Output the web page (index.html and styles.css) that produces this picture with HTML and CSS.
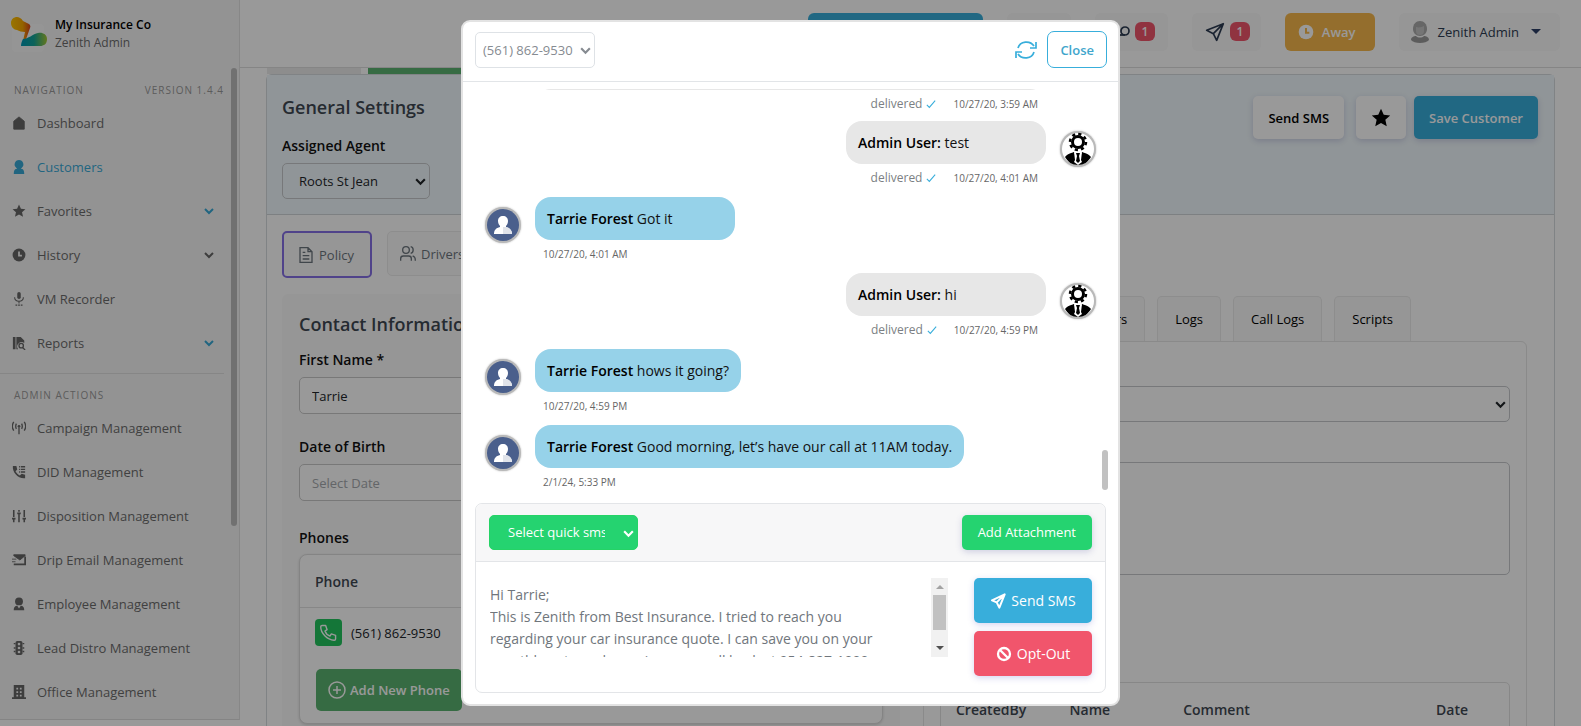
FILE: index.html
```html
<!DOCTYPE html>
<html lang="en">
<head>
    <meta charset="UTF-8">
    <meta name="viewport" content="width=device-width, initial-scale=1.0">
    <title>Zenith - Customer</title>
    <link rel="stylesheet" href="styles.css">
</head>
<body>
    <!-- Shared icons -->
    <svg class="sprite" aria-hidden="true">
        <symbol id="chevron" viewBox="0 0 12 12"><path d="M2 4l4 4 4-4" fill="none" stroke="currentColor" stroke-width="2"/></symbol>
        <symbol id="star" viewBox="0 0 24 24"><path d="M12 1l3.3 7.2 7.7.8-5.8 5.2 1.7 7.8-6.9-4-6.9 4 1.7-7.8L1 9l7.7-.8z" fill="currentColor"/></symbol>
        <symbol id="clock" viewBox="0 0 24 24"><circle cx="12" cy="12" r="11" fill="currentColor"/><path d="M12 6v7h5" fill="none" stroke="var(--hand)" stroke-width="3"/></symbol>
        <symbol id="plane" viewBox="0 0 24 24"><path d="M22 2L2 10l8 4 4 8zM22 2L10 14" fill="none" stroke="currentColor" stroke-width="2" stroke-linejoin="round"/></symbol>
        <symbol id="client" viewBox="0 0 36 36">
            <circle cx="18" cy="18" r="16" fill="#4a5f8c"/>
            <path d="M18 9c-3 0-5 2-5 5 0 2 1 4 2 5v1c-4 1-6 3-6 7h18c0-4-2-6-6-7v-1c1-1 2-3 2-5 0-3-2-5-5-5z" fill="#fff"/>
            <path d="M18 20h3c4 1 6 3 6 7h-9z" fill="#e1e4ea"/>
        </symbol>
        <symbol id="admin" viewBox="0 0 36 36">
            <circle cx="18" cy="18" r="16" fill="#fff"/>
            <circle cx="18" cy="11" r="5.500" fill="none" stroke="#000" stroke-width="3"/>
            <circle cx="18" cy="11" r="8" fill="none" stroke="#000" stroke-width="2.500" stroke-dasharray="3.200 3.080"/>
            <path d="M5 26c3-4 7-4 9-5l4 10 4-10c2 1 6 1 9 5-3 5-7 8-13 8s-10-3-13-8z" fill="#000"/>
            <path d="M14 21l4 3 4-3-1 8 1 2-4 3-4-3 1-2z" fill="#fff"/>
            <path d="M16 22h4l-1 3 1 5-2 2-2-2 1-5z" fill="#000"/>
        </symbol>
    </svg>

    <div class="app">
        <aside class="sidebar">
            <div class="brand">
                <svg class="logo" viewBox="0 0 36 36">
                    <defs>
                        <linearGradient id="warm"><stop offset="0" stop-color="#ffc400"/><stop offset=".6" stop-color="#f5a400"/><stop offset="1" stop-color="#d9411c"/></linearGradient>
                        <linearGradient id="cool"><stop offset="0" stop-color="#0098b5"/><stop offset=".5" stop-color="#14a597"/><stop offset="1" stop-color="#a5c733"/></linearGradient>
                    </defs>
                    <rect x="1" y="8" width="32" height="28" rx="4" fill="#fff" opacity=".3"/>
                    <path d="M6 1c2 0 4 1 6 4l6 3c1 1 2 2 1 4l-5 14-2-1 2-9c-3 0-6-1-8-2-3 0-6-3-6-7s3-6 6-6z" fill="url(#warm)"/>
                    <path d="M10 30c0-3 1-5 2-7 5 0 10-5 15-6 4-1 9 1 9 6s-3 7-7 7z" fill="url(#cool)"/>
                </svg>
                <div>
                    <p class="company">My Insurance Co</p>
                    <p class="role">Zenith Admin</p>
                </div>
            </div>
            <nav>
                <div class="nav-title"><span>NAVIGATION</span><span>VERSION 1.4.4</span></div>
                <a href="#" class="nav-item"><svg viewBox="0 0 16 16"><path d="M8 1l6 5v9H2V6z" fill="currentColor" stroke="currentColor" stroke-linejoin="round"/></svg><span>Dashboard</span></a>
                <a href="#" class="nav-item active"><svg viewBox="0 0 16 16"><path d="M8 0a5 5 0 0 1 3 9l-1 1c3 0 4 2 4 6H2c0-4 1-6 4-6L5 9a5 5 0 0 1 3-9z" fill="currentColor"/></svg><span>Customers</span></a>
                <a href="#" class="nav-item"><svg><use href="#star"/></svg><span>Favorites</span><svg class="arrow blue"><use href="#chevron"/></svg></a>
                <a href="#" class="nav-item"><svg><use href="#clock"/></svg><span>History</span><svg class="arrow"><use href="#chevron"/></svg></a>
                <a href="#" class="nav-item"><svg viewBox="0 0 16 16"><rect x="6" y="0" width="4" height="8" rx="2" fill="currentColor"/><path d="M3 6c0 6 10 6 10 0M8 10v3M4 15h2M7 15h2M10 15h2" fill="none" stroke="currentColor" stroke-width="1.2"/></svg><span>VM Recorder</span></a>
                <a href="#" class="nav-item"><svg viewBox="0 0 16 16"><path d="M1 1h3v14H1zM5 1h5l4 4v3a5 5 0 0 0-7 7H5z" fill="currentColor"/><circle cx="10.500" cy="11" r="2.500" fill="none" stroke="currentColor" stroke-width="1.500"/><path d="M12 13l3 3" stroke="currentColor" stroke-width="1.500"/></svg><span>Reports</span><svg class="arrow blue"><use href="#chevron"/></svg></a>
                <div class="nav-title second"><span>ADMIN ACTIONS</span></div>
                <a href="#" class="nav-item"><svg viewBox="0 0 16 16"><circle cx="8" cy="6" r="1.500" fill="currentColor"/><path d="M8 7v8M5 9c-1-2-1-4 0-6M11 9c1-2 1-4 0-6M2 11C0 8 0 4 2 1M14 11c2-3 2-7 0-10" fill="none" stroke="currentColor" stroke-width="1.500"/></svg><span>Campaign Management</span></a>
                <a href="#" class="nav-item"><svg viewBox="0 0 16 16"><path d="M1 1h4l1 4-2 2c1 2 3 4 5 5l2-2 4 1v4C7 16 0 8 1 1z" fill="currentColor"/><path d="M8 2h1M10 2h5M8 5h1M10 5h5M8 8h1M10 8h5" stroke="currentColor" stroke-width="1.500"/></svg><span>DID Management</span></a>
                <a href="#" class="nav-item"><svg viewBox="0 0 16 16"><path d="M2 1v8M2 11v4M8 1v2M8 6v9M14 1v8M14 11v4M0 11h4M6 5h4M12 11h4" stroke="currentColor" stroke-width="1.800"/></svg><span>Disposition Management</span></a>
                <a href="#" class="nav-item"><svg viewBox="0 0 16 16"><path d="M2 2h13v1l-6 5-7-5zM0 7h5M0 10h4" fill="currentColor" stroke="currentColor"/><path d="M15 4v9H2" fill="none" stroke="currentColor" stroke-width="2"/></svg><span>Drip Email Management</span></a>
                <a href="#" class="nav-item"><svg viewBox="0 0 16 16"><circle cx="8" cy="5" r="4.500" fill="currentColor"/><path d="M2 15c0-4 2-5 4-5l2 3 2-3c2 0 4 1 4 5z" fill="currentColor"/></svg><span>Employee Management</span></a>
                <a href="#" class="nav-item"><svg viewBox="0 0 16 16"><rect x="4" y="0" width="8" height="16" rx="2" fill="currentColor"/><path d="M2 3h2M12 3h2M2 8h2M12 8h2M2 12h2M12 12h2" stroke="currentColor" stroke-width="1.500"/><g fill="#f6f6f6"><circle cx="8" cy="3.500" r="1.500"/><circle cx="8" cy="8" r="1.500"/><circle cx="8" cy="12.500" r="1.500"/></g></svg><span>Lead Distro Management</span></a>
                <a href="#" class="nav-item"><svg viewBox="0 0 16 16"><path d="M2 0h12v14h2v2H0v-2h2z" fill="currentColor"/><path d="M5 3h2v2H5zM9 3h2v2H9zM5 7h2v2H5zM9 7h2v2H9zM5 11h2v2H5zM9 11h2v2H9z" fill="#f6f6f6"/></svg><span>Office Management</span></a>
            </nav>
            <div class="side-thumb"></div>
        </aside>

        <div class="main">
            <header class="topbar">
                <button class="top-btn dialer" aria-label="Dialer"></button>
                <button class="top-btn calls" aria-label="Calls"></button>
                <button class="top-btn" aria-label="Voicemail"><svg class="voicemail" viewBox="0 0 22 12"><circle cx="5" cy="5" r="4" fill="none" stroke="currentColor" stroke-width="1.700"/><circle cx="17" cy="5" r="4" fill="none" stroke="currentColor" stroke-width="1.700"/><path d="M5 9h12" stroke="currentColor" stroke-width="1.700"/></svg><span class="badge">1</span></button>
                <button class="top-btn inbox" aria-label="Messages"><svg class="icon20"><use href="#plane"/></svg><span class="badge">1</span></button>
                <button class="top-btn away"><svg class="icon16"><use href="#clock"/></svg>Away</button>
                <button class="top-btn user"><svg class="face" viewBox="0 0 18 22"><path d="M9 0c4 0 7 3 7 8 0 4-3 7-7 7s-7-3-7-7c0-5 3-8 7-8z" fill="#aaa"/><path d="M5 6c3 1 6 0 8-1v5c0 3-2 4-4 4s-4-1-4-4z" fill="#c4c4c4"/><path d="M0 19c0-3 3-4 5-4 2 2 6 2 8 0 2 0 5 1 5 4-3 4-15 4-18 0z" fill="#9a9a9a"/></svg>Zenith Admin<span class="caret"></span></button>
            </header>

            <div class="strip"><span class="strip-gray"></span><span class="strip-green"></span></div>
            <section class="panel">
                <div class="panel-head">
                    <div>
                        <h2>General Settings</h2>
                        <label for="agent">Assigned Agent</label>
                        <div class="select agent-select">
                            <select id="agent"><option>Roots St Jean</option></select>
                            <svg><use href="#chevron"/></svg>
                        </div>
                    </div>
                    <div class="head-actions">
                        <button class="btn light">Send SMS</button>
                        <button class="btn light fav" aria-label="Favorite"><svg class="icon20"><use href="#star"/></svg></button>
                        <button class="btn blue-btn">Save Customer</button>
                    </div>
                </div>

                <div class="tabs">
                    <button class="tab selected"><svg class="icon16" viewBox="0 0 24 24"><path d="M3 1h12l6 6v16H3zM15 1v6h6M7 8h4M7 13h10M7 18h10" fill="none" stroke="currentColor" stroke-width="2"/></svg>Policy</button>
                    <button class="tab"><svg class="icon16" viewBox="0 0 24 24"><circle cx="9" cy="6" r="5" fill="none" stroke="currentColor" stroke-width="2"/><path d="M1 22v-3c0-3 2-4 4-4h8c3 0 4 2 4 4v3M16 1c5 1 5 9 0 10M19 15c3 1 4 2 4 7" fill="none" stroke="currentColor" stroke-width="2"/></svg>Drivers</button>
                </div>

                <div class="columns">
                    <div class="contact">
                        <h2>Contact Information</h2>
                        <label for="first">First Name *</label>
                        <input type="text" id="first" value="Tarrie">
                        <label for="dob">Date of Birth</label>
                        <input type="text" id="dob" placeholder="Select Date">
                        <h3>Phones</h3>
                        <div class="phones">
                            <div class="phones-head">Phone</div>
                            <div class="phone-row">
                                <button class="call" aria-label="Call"><svg viewBox="0 0 24 24"><path d="M3 2h5l2 6-3 2c1 3 4 6 7 7l2-3 6 2v5c0 1-1 2-2 2C10 22 1 13 1 4c0-1 1-2 2-2z" fill="none" stroke="currentColor" stroke-width="2" stroke-linejoin="round"/></svg></button>
                                <span>(561) 862-9530</span>
                            </div>
                            <button class="add-phone"><svg viewBox="0 0 18 18"><path d="M9 5v8M5 9h8" stroke="currentColor" stroke-width="1.500"/><circle cx="9" cy="9" r="8" fill="none" stroke="currentColor" stroke-width="1.500"/></svg>Add New Phone</button>
                        </div>
                    </div>

                    <div class="activity">
                        <div class="log-tabs">
                            <button>Reminders</button>
                            <button>Logs</button>
                            <button>Call Logs</button>
                            <button>Scripts</button>
                        </div>
                        <div class="log-card">
                            <div class="select">
                                <select aria-label="Note type"><option></option></select>
                                <svg><use href="#chevron"/></svg>
                            </div>
                            <textarea class="note" aria-label="Note"></textarea>
                            <div class="table-wrap">
                                <table>
                                    <thead><tr><th class="by">CreatedBy</th><th class="name">Name</th><th>Comment</th><th class="date">Date</th></tr></thead>
                                </table>
                            </div>
                        </div>
                    </div>
                </div>
            </section>
        </div>
    </div>

    <div class="backdrop">
        <div class="modal" role="dialog" aria-label="SMS conversation">
            <div class="modal-head">
                <div class="select number-select">
                    <select aria-label="Phone number"><option>(561) 862-9530</option></select>
                    <svg><use href="#chevron"/></svg>
                </div>
                <svg class="refresh" viewBox="0 0 22 20"><path d="M3 8c2-7 12-8 16-2M21 2v6h-6M19 12c-2 7-12 8-16 2M1 18v-6h6" fill="none" stroke="currentColor" stroke-width="1.700"/></svg>
                <button class="close">Close</button>
            </div>

            <div class="thread">
                <div class="msg out long">
                    <div class="body"><p class="bubble"></p><div class="meta">delivered <svg viewBox="0 0 12 12"><path d="M1 7l3 3 7-8" fill="none" stroke="#38aedb" stroke-width="1.300"/></svg><time>10/27/20, 3:59 AM</time></div></div>
                </div>
                <div class="msg out">
                    <div class="body"><p class="bubble"><b>Admin User:</b> test</p><div class="meta">delivered <svg viewBox="0 0 12 12"><path d="M1 7l3 3 7-8" fill="none" stroke="#38aedb" stroke-width="1.300"/></svg><time>10/27/20, 4:01 AM</time></div></div>
                    <svg class="avatar"><use href="#admin"/></svg>
                </div>
                <div class="msg">
                    <svg class="avatar"><use href="#client"/></svg>
                    <div class="body"><p class="bubble"><b>Tarrie Forest</b> Got it</p><div class="meta"><time>10/27/20, 4:01 AM</time></div></div>
                </div>
                <div class="msg out">
                    <div class="body"><p class="bubble"><b>Admin User:</b> hi</p><div class="meta">delivered <svg viewBox="0 0 12 12"><path d="M1 7l3 3 7-8" fill="none" stroke="#38aedb" stroke-width="1.300"/></svg><time>10/27/20, 4:59 PM</time></div></div>
                    <svg class="avatar"><use href="#admin"/></svg>
                </div>
                <div class="msg">
                    <svg class="avatar"><use href="#client"/></svg>
                    <div class="body"><p class="bubble"><b>Tarrie Forest</b> hows it going?</p><div class="meta"><time>10/27/20, 4:59 PM</time></div></div>
                </div>
                <div class="msg">
                    <svg class="avatar"><use href="#client"/></svg>
                    <div class="body"><p class="bubble"><b>Tarrie Forest</b> Good morning, let’s have our call at 11AM today.</p><div class="meta"><time>2/1/24, 5:33 PM</time></div></div>
                </div>
                <div class="thread-thumb"></div>
            </div>

            <div class="composer">
                <div class="composer-head">
                    <div class="select quick">
                        <select aria-label="Quick SMS"><option>Select quick sms</option></select>
                        <svg><use href="#chevron"/></svg>
                    </div>
                    <button class="attach">Add Attachment</button>
                </div>
                <div class="composer-body">
                    <textarea class="message" aria-label="Message">Hi Tarrie;
This is Zenith from Best Insurance. I tried to reach you
regarding your car insurance quote. I can save you on your
monthly auto and premium. can call back at 954-827-1000</textarea>
                    <div class="scrollbar"><span class="up"></span><span class="thumb"></span><span class="down"></span></div>
                    <div class="send-actions">
                        <button class="send"><svg class="icon16" viewBox="0 0 24 24"><path d="M22 2L3 11l7 3 4 8zM22 2L10 14" fill="none" stroke="currentColor" stroke-width="3" stroke-linejoin="round"/></svg>Send SMS</button>
                        <button class="send opt"><svg class="icon16" viewBox="0 0 16 16"><circle cx="8" cy="8" r="6" fill="none" stroke="currentColor" stroke-width="2.300"/><path d="M4 4l8 8" stroke="currentColor" stroke-width="2.300"/></svg>Opt-Out</button>
                    </div>
                </div>
            </div>
        </div>
    </div>
</body>
</html>
```
FILE: styles.css
```css
* {
    box-sizing: border-box;
    margin: 0;
    padding: 0;
}

body {
    font-family: "Open Sans", "Noto Sans", sans-serif;
    font-size: 14px;
    line-height: 20px;
    color: #212529;
    background-color: #fff;
    height: 100vh;
    overflow: hidden;
}

button, input, select, textarea {
    font: inherit;
    color: inherit;
}

button {
    border: none;
    cursor: pointer;
    white-space: nowrap;
}

.sprite {
    position: absolute;
    width: 0;
    height: 0;
}

.icon16 {
    width: 16px;
    height: 16px;
}

.icon20 {
    width: 20px;
    height: 20px;
}

.app {
    display: flex;
    height: 100vh;
}

/* Sidebar */
.sidebar {
    position: relative;
    width: 240px;
    flex-shrink: 0;
    align-self: flex-start;
    height: calc(100vh - 6px);
    background-color: #f6f6f6;
    border-right: 1px solid #e2e2e2;
    border-bottom: 1px solid #dcdcdc;
    --hand: #f6f6f6;
}

.brand {
    display: flex;
    gap: 8px;
    height: 79px;
    padding: 16px 11px 0;
}

.logo {
    width: 36px;
    height: 36px;
}

.brand p {
    line-height: 18px;
}

.company {
    color: #000;
    font-size: 12px;
    font-weight: 600;
}

.role {
    color: #6c6c6c;
    font-size: 12px;
}

.nav-title {
    display: flex;
    justify-content: space-between;
    width: 224px;
    padding-left: 14px;
    font-size: 10px;
    line-height: 22px;
    letter-spacing: 1px;
    color: #999;
    white-space: nowrap;
}

.nav-title.second {
    margin-top: 8px;
    padding-top: 10px;
    border-top: 1px solid #e0e0e0;
}

.nav-item {
    display: flex;
    align-items: center;
    gap: 11px;
    height: 44px;
    padding: 0 24px 0 12px;
    font-size: 13px;
    color: #6c6c6c;
    text-decoration: none;
}

.nav-item svg {
    width: 14px;
    height: 14px;
    color: #666;
}

.nav-item .arrow {
    width: 12px;
    height: 12px;
    margin-left: auto;
}

.nav-item.active,
.nav-item.active svg,
.nav-item .blue {
    color: #38a9d6;
}

.side-thumb {
    position: absolute;
    top: 68px;
    right: 2px;
    width: 6px;
    height: 458px;
    border-radius: 3px;
    background-color: #bdbdbd;
}

/* Top bar */
.main {
    flex: 1;
    min-width: 0;
}

.topbar {
    display: flex;
    align-items: center;
    justify-content: flex-end;
    gap: 24px;
    height: 68px;
    padding: 0 21px 4px 0;
    border-bottom: 1px solid #dedede;
}

.top-btn {
    display: flex;
    align-items: center;
    gap: 5px;
    height: 38px;
    padding: 0 13px;
    border-radius: 6px;
    background-color: #fafafa;
    color: #2c3b52;
}

.dialer {
    width: 175px;
    background-color: #38aedb;
}

.calls {
    width: 64px;
}

.voicemail {
    width: 22px;
    height: 12px;
}

.inbox {
    padding-right: 11px;
}

.badge {
    width: 20px;
    border-radius: 6px;
    background-color: #f1556c;
    color: #fff;
    font-size: 12px;
    font-weight: 600;
    line-height: 19px;
}

.away {
    gap: 8px;
    padding: 0 19px 0 13px;
    background-color: #f7b84b;
    color: #fff;
    font-size: 13px;
    font-weight: 600;
    --hand: #f7b84b;
}

.user {
    gap: 9px;
    padding: 0 19px 0 12px;
    font-size: 13px;
    font-weight: 500;
}

.face {
    width: 18px;
    height: 22px;
}

.caret {
    margin-left: 3px;
    border: 5px solid transparent;
    border-top-color: #2c3e66;
    border-bottom: none;
}

/* Customer panel */
.strip {
    display: flex;
    gap: 7px;
    height: 6px;
    margin-left: 27px;
}

.strip-gray {
    width: 94px;
    background-color: #ebebeb;
}

.strip-green {
    width: 220px;
    background-color: #5bb370;
}

.panel {
    margin: 0 26px;
    border: 1px solid #d5dade;
    border-radius: 6px 6px 0 0;
}

.panel h2 {
    font-size: 18px;
    font-weight: 600;
    line-height: 26px;
    color: #3f4853;
}

.panel label,
.panel h3 {
    display: block;
    font-size: 14px;
    font-weight: 600;
    color: #111;
}

.panel-head {
    display: flex;
    justify-content: space-between;
    height: 140px;
    padding: 19px 16px 0 15px;
    border-bottom: 1px solid #d0d5d9;
    background-color: #f1f9fd;
}

.panel-head label {
    margin: 16px 0 7px;
}

.select {
    position: relative;
}

.select select {
    display: block;
    width: 100%;
    height: 36px;
    border: 1px solid #c6c9cc;
    border-radius: 5px;
    background-color: transparent;
    font-size: 13px;
    appearance: none;
}

.select svg {
    position: absolute;
    top: 12px;
    right: 3px;
    width: 13px;
    height: 13px;
    pointer-events: none;
}

.agent-select {
    width: 148px;
}

.agent-select select {
    padding-left: 16px;
}

.head-actions {
    display: flex;
    gap: 8px;
}

.btn {
    height: 43px;
    margin-top: 2px;
    padding: 0 15px;
    border-radius: 5px;
    font-size: 13px;
    font-weight: 600;
    box-shadow: 0 2px 6px rgba(90, 90, 160, 0.25);
}

.light {
    background-color: #fff;
    color: #000;
}

.fav {
    display: flex;
    align-items: center;
    margin-left: 4px;
}

.blue-btn {
    background-color: #38aedb;
    color: #fff;
}

.tabs {
    display: flex;
    align-items: flex-start;
    gap: 15px;
    padding: 16px 15px;
}

.tab {
    display: flex;
    align-items: center;
    gap: 5px;
    height: 45px;
    padding: 0 12px;
    border: 1px solid #ececec;
    border-radius: 5px;
    background-color: #fbfbfb;
    font-size: 13px;
    color: #6c757d;
}

.tab.selected {
    height: 47px;
    padding: 0 16px 0 14px;
    border: 2px solid #8570e6;
}

.columns {
    display: grid;
    grid-template-columns: 618fr 604fr;
    gap: 23px;
    padding: 0 27px 0 15px;
}

.contact {
    padding: 17px;
    border-radius: 6px;
    background-color: #fbfbfb;
}

.contact label {
    margin: 13px 0 7px;
}

.contact input {
    display: block;
    width: 100%;
    height: 37px;
    margin-bottom: 23px;
    padding: 0 12px;
    border: 1px solid #c9c9c9;
    border-radius: 5px;
    background-color: #fff;
    font-size: 13px;
}

.contact input::placeholder {
    color: #a5a9ad;
}

.contact h3 {
    margin: 27px 0 6px;
}

.phones {
    padding-bottom: 12px;
    border: 1px solid #ddd;
    border-radius: 8px;
    background-color: #fff;
    box-shadow: 0 1px 3px rgba(0, 0, 0, 0.15);
}

.phones-head {
    height: 53px;
    padding: 17px 15px;
    border-bottom: 1px solid #e2e2e2;
    font-weight: 600;
    color: #3f4853;
}

.phone-row {
    display: flex;
    align-items: center;
    gap: 9px;
    height: 49px;
    padding: 0 15px;
    font-size: 13px;
}

.call {
    width: 27px;
    height: 27px;
    padding: 5px;
    border-radius: 4px;
    background-color: #22c55e;
    color: #fff;
}

.call svg {
    display: block;
}

.add-phone {
    display: flex;
    align-items: center;
    gap: 4px;
    height: 42px;
    margin: 12px 0 0 16px;
    padding: 0 12px;
    border-radius: 5px;
    background-color: #5bb370;
    color: #fff;
    font-size: 13px;
    font-weight: 600;
}

.add-phone svg {
    width: 18px;
    height: 18px;
}

.activity {
    padding-top: 2px;
}

.log-tabs {
    display: flex;
    justify-content: flex-end;
    gap: 12px;
    padding-right: 116px;
}

.log-tabs button {
    height: 45px;
    padding: 0 17px;
    border: 1px solid #ebebeb;
    border-bottom: none;
    border-radius: 5px 5px 0 0;
    background-color: #fafafa;
    font-size: 13px;
    color: #000;
}

.log-card {
    padding: 44px 16px 0;
    border: 1px solid #e6e6e6;
    border-radius: 0 6px 0 0;
}

.note {
    display: block;
    width: 100%;
    height: 113px;
    margin: 40px 0 107px;
    border: 1px solid #c6c9cc;
    border-radius: 5px;
    background-color: transparent;
    resize: none;
}

.table-wrap {
    border: 1px solid #e2e2e2;
    border-radius: 5px;
}

table {
    width: 100%;
    border-collapse: collapse;
}

th {
    height: 54px;
    padding-left: 15px;
    font-weight: 600;
    text-align: left;
    color: #3f4853;
}

.by,
.name {
    width: 20%;
}

.date {
    width: 88px;
}

/* SMS modal */
.backdrop {
    position: fixed;
    inset: 0;
    padding-top: 20px;
    background-color: rgba(0, 0, 0, 0.4);
}

.modal {
    max-width: 659px;
    margin: 0 auto;
    padding-bottom: 11px;
    border: 2px solid #e3e3e3;
    border-radius: 9px;
    background-color: #fff;
}

.modal-head {
    display: flex;
    align-items: center;
    height: 60px;
    padding: 0 11px 4px 12px;
    border-bottom: 1px solid #e2e5e8;
}

.number-select {
    width: 120px;
    margin-right: auto;
    color: #868b91;
}

.number-select select {
    padding-left: 7px;
    border-color: #dee2e6;
}

.refresh {
    width: 22px;
    height: 20px;
    margin-right: 10px;
    color: #38aedb;
}

.close {
    height: 37px;
    padding: 0 12px;
    border: 1px solid #38aedb;
    border-radius: 7px;
    background-color: #fff;
    color: #3fa6cc;
    font-size: 13px;
    font-weight: 600;
}

.thread {
    position: relative;
    display: flex;
    flex-direction: column;
    justify-content: flex-end;
    height: 412px;
    margin-top: 7px;
    padding: 0 22px;
    overflow: hidden;
}

.msg {
    display: flex;
    flex-shrink: 0;
    gap: 14px;
    height: 76px;
}

.out {
    justify-content: flex-end;
}

.bubble {
    min-width: 200px;
    min-height: 43px;
    padding: 12px 12px 11px;
    border-radius: 16px;
    background-color: #96d2e9;
    color: #111;
}

.bubble b {
    font-weight: 600;
    color: #000;
}

.out .bubble {
    background-color: #e7e7e7;
}

/* Full-width message, its avatar has scrolled out */
.msg.long {
    height: 74px;
    padding-right: 50px;
}

.long .body {
    width: 511px;
}

.avatar {
    width: 36px;
    height: 36px;
    margin-top: 10px;
    border-radius: 50%;
    background-color: #b9b9b9;
    box-shadow: 0 0 2px rgba(0, 0, 0, 0.3);
}

.meta {
    display: flex;
    align-items: center;
    height: 27px;
    padding: 0 8px;
    font-size: 12px;
    color: #7b7f83;
}

.out .meta {
    justify-content: flex-end;
}

.meta svg {
    width: 10px;
    height: 10px;
    margin: 0 17px 0 4px;
}

.meta time {
    font-size: 10px;
    color: #666;
}

.thread-thumb {
    position: absolute;
    right: 10px;
    bottom: 11px;
    width: 6px;
    height: 40px;
    border-radius: 3px;
    background-color: #c1c1c1;
}

.composer {
    margin: 2px 12px 0;
    border: 1px solid #e3e5e8;
    border-radius: 7px;
}

.composer-head {
    display: flex;
    align-items: center;
    justify-content: space-between;
    height: 58px;
    padding: 0 13px 1px;
    border-bottom: 1px solid #e3e5e8;
    border-radius: 7px 7px 0 0;
    background-color: #f7f7f8;
}

.quick {
    width: 149px;
    color: #fff;
}

.quick select {
    height: 35px;
    padding: 0 32px 0 18px;
    border-color: #25d366;
    background-color: #25d370;
}

.attach {
    height: 35px;
    padding: 0 16px;
    border-radius: 5px;
    background-color: #25d370;
    color: #fff;
    font-size: 13px;
    font-weight: 500;
    box-shadow: 0 2px 6px rgba(90, 90, 160, 0.25);
}

.composer-body {
    display: flex;
    align-items: flex-start;
    padding: 16px 13px 16px 14px;
}

.message {
    flex: 1;
    height: 79px;
    padding-top: 6px;
    border: none;
    outline: none;
    resize: none;
    overflow: hidden;
    line-height: 22px;
    color: #70767c;
}

.scrollbar {
    display: flex;
    flex-direction: column;
    align-items: center;
    width: 17px;
    height: 79px;
    padding: 7px 0;
    background-color: #f1f1f1;
}

.up,
.down {
    border: 4px solid transparent;
}

.up {
    border-top: none;
    border-bottom-color: #a3a3a3;
}

.down {
    margin-top: auto;
    border-bottom: none;
    border-top-color: #505050;
}

.thumb {
    width: 13px;
    height: 35px;
    margin-top: 6px;
    background-color: #c1c1c1;
}

.send-actions {
    display: flex;
    flex-direction: column;
    gap: 8px;
    width: 118px;
    margin-left: 26px;
}

.send {
    display: flex;
    align-items: center;
    justify-content: center;
    gap: 5px;
    height: 45px;
    border-radius: 5px;
    background-color: #38aedb;
    color: #fff;
    font-weight: 500;
    box-shadow: 0 2px 6px rgba(90, 90, 200, 0.25);
}

.opt {
    background-color: #f1556c;
}
```
